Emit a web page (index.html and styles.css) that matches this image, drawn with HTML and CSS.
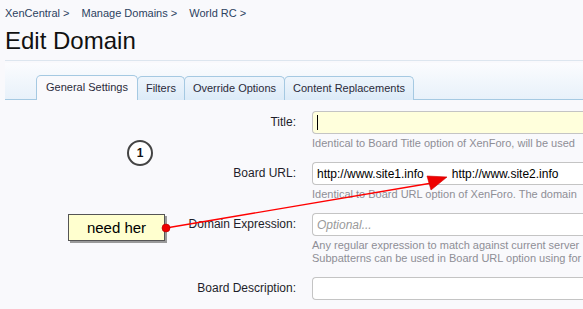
FILE: index.html
```html
<!DOCTYPE html>
<html>
<head>
<meta charset="utf-8">
<link rel="stylesheet" href="styles.css">
</head>
<body>
<div class="page">
  <nav class="crumbs">
    <span class="crumb">XenCentral &gt;</span>
    <span class="crumb">Manage Domains &gt;</span>
    <span class="crumb">World RC &gt;</span>
  </nav>
  <h1 class="title">Edit Domain</h1>
  <div class="rule"></div>
  <div class="tabbar">
    <span class="tab active">General Settings</span>
    <span class="tab">Filters</span>
    <span class="tab">Override Options</span>
    <span class="tab">Content Replacements</span>
  </div>
  <div class="form">
    <div class="row">
      <label class="label">Title:</label>
      <div class="field">
        <div class="input focus"><span class="caret"></span></div>
        <div class="hint">Identical to Board Title option of XenForo, will be used</div>
      </div>
    </div>
    <div class="row">
      <label class="label">Board URL:</label>
      <div class="field">
        <div class="input"><span class="val">http://www.site1.info</span><span class="val2">http://www.site2.info</span></div>
        <div class="hint">Identical to Board URL option of XenForo. The domain</div>
      </div>
    </div>
    <div class="row">
      <label class="label">Domain Expression:</label>
      <div class="field">
        <div class="input"><span class="ph">Optional...</span></div>
        <div class="hint">Any regular expression to match against current server<br>Subpatterns can be used in Board URL option using for</div>
      </div>
    </div>
    <div class="row">
      <label class="label">Board Description:</label>
      <div class="field">
        <div class="input"></div>
      </div>
    </div>
  </div>

  <div class="step">1</div>
  <div class="callout">need her</div>
  <svg class="arrow" width="583" height="309" viewBox="0 0 583 309">
    <line x1="166" y1="228" x2="432" y2="183" stroke="#ff0000" stroke-width="1.3"/>
    <polygon points="447,177 427,176 431,190" fill="#ee0000" stroke="#cc0000" stroke-width="0.6"/>
    <circle cx="166" cy="228" r="4" fill="#ee0000" stroke="#b00000" stroke-width="0.6"/>
  </svg>
</div>
</body>
</html>
```

FILE: styles.css
```css
html, body {
  margin: 0;
  padding: 0;
  background: #f9f9fc;
  overflow: hidden;
}
.page {
  position: relative;
  width: 583px;
  height: 309px;
  overflow: hidden;
  font-family: "Liberation Sans", Arial, sans-serif;
  color: #1a1a1a;
}
.crumbs {
  display: flex;
  gap: 12px;
  padding: 7px 0 0 5px;
  height: 14px;
  font-size: 11px;
  line-height: 13px;
  color: #2c4260;
}
.title {
  margin: 0;
  padding: 5px 0 0 5px;
  font-weight: normal;
  font-size: 24px;
  line-height: 30px;
  color: #111;
}
.rule {
  margin: 4px 0 0 5px;
  height: 1px;
  background: #dde6ef;
}
.tabbar {
  margin: 2px 0 0 5px;
  height: 36px;
  display: flex;
  align-items: flex-end;
  padding-left: 31px;
  border-bottom: 1px solid #a5c9e2;
  background: linear-gradient(#fbfcfe, #e8f1fa);
}
.tab {
  box-sizing: border-box;
  height: 24px;
  padding: 0 8px;
  margin-bottom: -1px;
  font-size: 11px;
  line-height: 23px;
  color: #2a2a3a;
  border: 1px solid #a5c9e2;
  border-bottom: none;
  border-radius: 5px 5px 0 0;
  background: linear-gradient(#eef5fc, #dcebf8);
}
.tab + .tab {
  margin-left: -1px;
}
.tab.active {
  background: #f9f9fc;
  height: 25px;
  padding: 0 9px;
}
.form {
  padding-top: 11px;
}
.row {
  display: flex;
  margin-bottom: 12px;
}
.label {
  flex: none;
  width: 296px;
  box-sizing: border-box;
  text-align: right;
  font-size: 12px;
  line-height: 23px;
  color: #1e1e2a;
}
.field {
  flex: none;
  width: 271px;
  margin-left: 16px;
}
.input {
  box-sizing: border-box;
  height: 23px;
  width: 300px;
  border: 1px solid #c4c4c4;
  border-right: none;
  border-radius: 4px 0 0 4px;
  background: #fff;
  display: flex;
  align-items: center;
  padding-left: 4px;
  font-size: 12px;
  white-space: nowrap;
}
.input.focus {
  background: #ffffdc;
}
.caret {
  width: 1px;
  height: 15px;
  background: #000;
}
.val { color: #000; flex: none; }
.val2 { color: #000; flex: none; margin-left: 28px; }
.ph {
  color: #9a9a9a;
  font-style: italic;
}
.hint {
  margin-top: 3px;
  font-size: 11px;
  line-height: 13px;
  color: #8e8e96;
  white-space: nowrap;
}
.step {
  position: absolute;
  left: 127px;
  top: 140px;
  width: 22px;
  height: 22px;
  border: 2px solid #444;
  border-radius: 50%;
  background: #fff;
  text-align: center;
  font-weight: bold;
  font-size: 12px;
  line-height: 22px;
  color: #111;
}
.callout {
  position: absolute;
  left: 68px;
  top: 214px;
  width: 97px;
  height: 27px;
  box-sizing: border-box;
  border: 1px solid #555;
  background: #ffffcf;
  box-shadow: 2px 2px 0 #9a9a9a;
  text-align: center;
  font-size: 15px;
  line-height: 25px;
  color: #000;
}
.arrow {
  position: absolute;
  left: 0;
  top: 0;
  pointer-events: none;
}
```
